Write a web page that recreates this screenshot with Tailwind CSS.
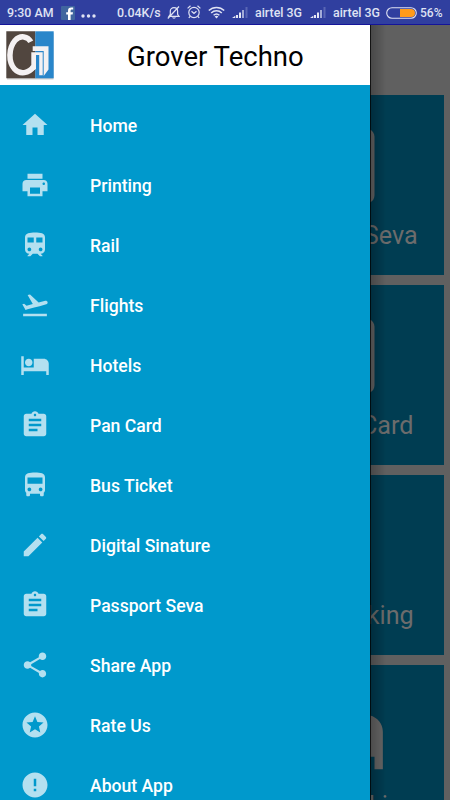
<!DOCTYPE html>
<html lang="en">
<head>
<meta charset="utf-8">
<title>Grover Techno</title>
<script src="https://cdn.jsdelivr.net/npm/@tailwindcss/browser@4"></script>
</head>
<body class="w-[450px] h-[800px] overflow-hidden bg-[#606060] font-[Roboto,sans-serif]">
<svg class="hidden">
  <symbol id="clipboard" viewBox="0 0 24 24"><path d="M19 3h-4.180C14.400 1.840 13.300 1 12 1c-1.300 0-2.400.84-2.820 2H5c-1.100 0-2 .9-2 2v14c0 1.100.9 2 2 2h14c1.100 0 2-.9 2-2V5c0-1.100-.9-2-2-2zm-7 0c.55 0 1 .45 1 1s-.45 1-1 1-1-.45-1-1 .45-1 1-1zm2 14H7v-2h7v2zm3-4H7v-2h10v2zm0-4H7V7h10v2z"/></symbol>
  <symbol id="bus" viewBox="0 0 24 24"><path d="M4 16c0 .88.39 1.670 1 2.220V20c0 .55.45 1 1 1h1c.55 0 1-.45 1-1v-1h8v1c0 .55.45 1 1 1h1c.55 0 1-.45 1-1v-1.780c.61-.55 1-1.340 1-2.220V6c0-3.500-3.580-4-8-4s-8 .5-8 4v10zm3.500 1c-.83 0-1.500-.67-1.500-1.500S6.670 14 7.500 14s1.500.67 1.500 1.500S8.330 17 7.500 17zm9 0c-.83 0-1.500-.67-1.500-1.500s.67-1.500 1.500-1.500 1.500.67 1.500 1.500-.67 1.500-1.500 1.500zm1.500-6H6V6h12v5z"/></symbol>
  <symbol id="train" viewBox="0 0 24 24"><path d="M12 2c-4 0-8 .5-8 4v9.500C4 17.430 5.570 19 7.500 19L6 20.500v.5h2.230l2-2H14l2 2h2v-.5L16.500 19c1.930 0 3.500-1.570 3.500-3.500V6c0-3.500-3.580-4-8-4zM7.500 17c-.83 0-1.500-.67-1.500-1.500S6.670 14 7.500 14s1.500.67 1.500 1.500S8.330 17 7.500 17zm3.500-7H6V6h5v4zm2 0V6h5v4h-5zm3.500 7c-.83 0-1.500-.67-1.500-1.500s.67-1.500 1.500-1.500 1.500.67 1.500 1.500-.67 1.500-1.500 1.500z"/></symbol>
  <symbol id="hotel" viewBox="0 0 24 24"><path d="M7 13c1.660 0 3-1.340 3-3S8.660 7 7 7s-3 1.340-3 3 1.340 3 3 3zm12-6h-8v7H3V5H1v15h2v-3h18v3h2v-9c0-2.210-1.790-4-4-4z"/></symbol>
  <symbol id="signal" viewBox="0 0 16 11"><path fill="#e6e8f5" d="M0 11 3.300 8.700V11zM4 8h2v3H4zM7 5.500h2V11H7z"/><path fill="#a3abd8" d="M10 3h2v8h-2z"/><path fill="#5966b4" d="M13.500 0h2v11h-2z"/></symbol>
</svg>
<div class="flex flex-col h-[800px]">
  <header class="relative h-[25px] shrink-0 bg-[#303f9f] border-b border-[#14149a] text-[#dfe2f3] text-[12.400px] font-medium leading-[26px] whitespace-nowrap flex items-center">
    <span class="ml-[7px] w-[54px] pt-[1px]">9:30 AM</span>
    <svg class="w-[14px] h-[14px] mt-[1px] shrink-0" viewBox="0 0 14 14"><rect width="14" height="14" rx="1" fill="#40669f"/><path d="M9.600 14V8.500h2L12 6.200H9.600V4.900c0-.9.400-1.300 1.300-1.300h1.300V1.500h-1.900C8.100 1.500 7 2.700 7 4.700v1.500H5.200v2.300H7V14z" fill="#fff"/></svg>
    <svg class="ml-[6px] mt-[8px] w-[15px] h-[4px] shrink-0" viewBox="0 0 15 4" fill="#dfe2f3"><circle cx="2" cy="2" r="1.700"/><circle cx="7.500" cy="2" r="1.700"/><circle cx="13" cy="2" r="1.700"/></svg>
    <span class="ml-[21px] w-[50px] pt-[1px]">0.04K/s</span>
    <svg class="w-[13px] h-[13px] shrink-0" viewBox="0 0 13 13" fill="none" stroke="#dfe2f3" stroke-width="1.200"><path d="M2 10.300h10l-1.400-2V5c0-2-1.500-3.300-3.600-3.300S3.300 3 3.300 5v3.300zM5.500 11.500c.5.700 2.500.7 3 0M12 .5.8 12.500"/></svg>
    <svg class="ml-[7px] w-[14px] h-[14px] shrink-0" viewBox="0 0 14 14" fill="none" stroke="#dfe2f3" stroke-width="1.200"><circle cx="7" cy="7.500" r="5.200"/><path d="M.6 3.400 3.500.8M10.500.8l2.900 2.600M4.500 6.300 7 8.500l2.500-2.200M3 11.500l-1.200 1.400M11 11.500l1.200 1.400"/></svg>
    <svg class="ml-[7px] w-[17px] h-[13px] shrink-0" viewBox="0 0 17 13" fill="none" stroke="#dfe2f3" stroke-width="1.500"><path d="M.8 4.600c4.200-4.300 11.200-4.300 15.400 0M3.200 7c3-3 7.600-3 10.600 0M5.600 9.300c1.700-1.600 4.100-1.600 5.800 0"/><path d="m6.600 10.500 1.900 2 1.900-2c-1.100-1-2.700-1-3.800 0z" fill="#dfe2f3" stroke="none"/></svg>
    <svg class="ml-[7px] mt-[1px] w-[16px] h-[11px] shrink-0"><use href="#signal"/></svg>
    <span class="ml-[7px] w-[55px] pt-[1px]">airtel 3G</span>
    <svg class="w-[16px] h-[11px] mt-[1px] shrink-0"><use href="#signal"/></svg>
    <span class="ml-[7px] w-[53px] pt-[1px]">airtel 3G</span>
    <svg class="w-[31px] h-[12px] mt-[1px] shrink-0" viewBox="0 0 31 12"><rect x=".7" y=".7" width="29.600" height="10.600" rx="5.300" fill="none" stroke="#dfe2f3" stroke-width="1.100"/><path d="M14 2h11a4 4 0 0 1 0 8H14z" fill="#ff9b1a"/></svg>
    <span class="ml-[3px] pt-[1px] text-[12px]">56%</span>
  </header>
  <div class="flex flex-1 min-h-0">
    <nav class="w-[370px] shrink-0 bg-[#0099cc] overflow-hidden">
      <div class="h-[60px] bg-white flex items-start">
        <svg class="ml-[5px] mt-[4px] w-[50px] h-[52px] shrink-0" viewBox="0 0 50 52"><rect x="2" y="4" width="46.500" height="46.500" fill="#d0d0d0"/><path fill="#51463f" d="M1.300 2.300h29v47h-29z"/><path fill="#2986ca" d="M30.300 2.300h18.400v47H30.300z"/><path d="M25.800 12.800C23 7.500 15.500 5.500 10 11.500 3.300 19.500 3.300 33 9.500 40c5.500 6 14.500 4.500 19-2.500" fill="none" stroke="#f4f1f2" stroke-width="5.500"/><path d="M27.700 17.300h15.800v23.300l-4.800 6.300V21.900h-11zM26.300 23.300h11.400v22.900h-3.500V26H31v14l-4.700 3z" fill="#f4f1f2"/></svg>
        <h1 class="ml-[72px] text-[27.500px] leading-[64px] text-black whitespace-nowrap">Grover Techno</h1>
      </div>
      <ul class="pt-[10px] text-white text-[17.600px] font-medium [&>li]:h-[60px] [&>li]:flex [&>li]:items-center [&>li]:gap-[40px] [&>li]:pl-[20px] [&_span]:pt-[2px] [&_svg]:size-[30px] [&_svg]:fill-[#b3e0f0] [&_svg]:shrink-0">
        <li><svg viewBox="0 0 24 24"><path d="M10 20v-6h4v6h5v-8h3L12 3 2 12h3v8z"/></svg><span>Home</span></li>
        <li><svg viewBox="0 0 24 24"><path d="M19 8H5c-1.660 0-3 1.340-3 3v6h4v4h12v-4h4v-6c0-1.660-1.340-3-3-3zm-3 11H8v-5h8v5zm3-7c-.55 0-1-.45-1-1s.45-1 1-1 1 .45 1 1-.45 1-1 1zm-1-9H6v4h12V3z"/></svg><span>Printing</span></li>
        <li><svg><use href="#train"/></svg><span>Rail</span></li>
        <li><svg viewBox="0 0 24 24"><path d="M2.500 19h19v2h-19zm19.570-9.360c-.21-.8-1.040-1.280-1.840-1.060L14.920 10l-6.900-6.430-1.930.51 4.140 7.170-4.970 1.330-1.970-1.540-1.450.39 1.820 3.160.77 1.330 1.600-.43 5.310-1.420 4.350-1.160L21 11.490c.81-.23 1.280-1.050 1.070-1.850z"/></svg><span>Flights</span></li>
        <li><svg><use href="#hotel"/></svg><span>Hotels</span></li>
        <li><svg><use href="#clipboard"/></svg><span>Pan Card</span></li>
        <li><svg><use href="#bus"/></svg><span>Bus Ticket</span></li>
        <li><svg viewBox="0 0 24 24"><path d="M3 17.250V21h3.750L17.810 9.940l-3.750-3.750L3 17.250zM20.710 7.040c.39-.39.39-1.020 0-1.410l-2.340-2.340c-.39-.39-1.020-.39-1.410 0l-1.830 1.830 3.750 3.750 1.830-1.830z"/></svg><span>Digital Sinature</span></li>
        <li><svg><use href="#clipboard"/></svg><span>Passport Seva</span></li>
        <li><svg viewBox="0 0 24 24"><path d="M18 16.080c-.76 0-1.440.3-1.960.77L8.910 12.700c.05-.23.09-.46.09-.7s-.04-.47-.09-.7l7.050-4.110c.54.5 1.250.81 2.040.81 1.660 0 3-1.340 3-3s-1.340-3-3-3-3 1.340-3 3c0 .24.04.47.09.7L8.040 9.810C7.500 9.310 6.790 9 6 9c-1.660 0-3 1.340-3 3s1.340 3 3 3c.79 0 1.500-.31 2.040-.81l7.120 4.160c-.05.21-.08.43-.08.65 0 1.610 1.310 2.920 2.920 2.920s2.920-1.310 2.920-2.920-1.310-2.920-2.920-2.920z"/></svg><span>Share App</span></li>
        <li><svg viewBox="0 0 24 24"><path d="M11.990 2C6.470 2 2 6.480 2 12s4.470 10 9.990 10C17.520 22 22 17.520 22 12S17.520 2 11.990 2zm4.240 16L12 15.450 7.770 18l1.120-4.810-3.730-3.230 4.920-.42L12 5l1.920 4.530 4.920.42-3.730 3.230L16.230 18z"/></svg><span>Rate Us</span></li>
        <li><svg viewBox="0 0 24 24"><path d="M12 2C6.480 2 2 6.480 2 12s4.480 10 10 10 10-4.480 10-10S17.520 2 12 2zm1 15h-2v-2h2v2zm0-4h-2V7h2v6z"/></svg><span>About App</span></li>
      </ul>
    </nav>
    <main class="relative w-[80px] overflow-hidden bg-[#606060]">
      <div class="-ml-[140px] mt-[70px] w-[214px] flex flex-col gap-[10px] text-[25.200px] text-[#6c6c6c] [&>section]:h-[180px] [&>section]:shrink-0 [&>section]:bg-[#003d52] [&>section]:flex [&>section]:flex-col [&>section]:items-center [&>section]:pt-[21px] [&>section]:whitespace-nowrap [&_svg]:size-[100px] [&_svg]:shrink-0 [&_svg]:fill-[#666] [&_span]:mt-[5px] [&_span]:leading-[30px]">
        <section><svg><use href="#clipboard"/></svg><span>Passport Seva</span></section>
        <section><svg><use href="#clipboard"/></svg><span>Aadhaar Card</span></section>
        <section><svg><use href="#train"/></svg><span>Train Booking</span></section>
        <section><svg><use href="#hotel"/></svg><span>Hotel Booking</span></section>
      </div>
      <div class="absolute inset-y-0 left-0 w-[16px] border-l border-black/80 bg-gradient-to-r from-black/25 to-transparent"></div>
    </main>
  </div>
</div>
</body>
</html>
